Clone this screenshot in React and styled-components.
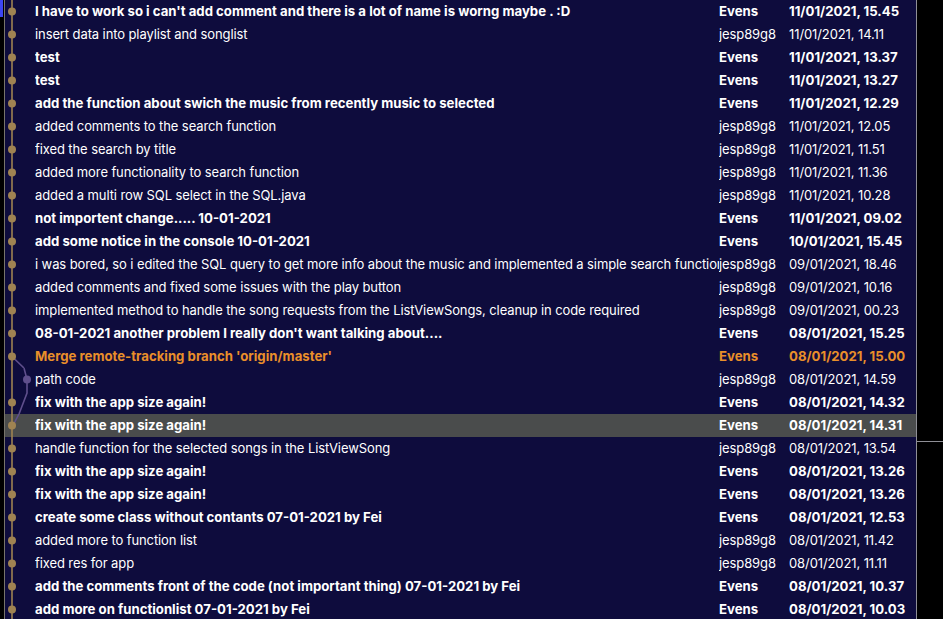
import React from 'react';
import styled, { createGlobalStyle } from 'styled-components';

const GlobalStyle = createGlobalStyle`
  html, body {
    margin: 0;
    padding: 0;
    background: #000;
    overflow: hidden;
  }
  body {
    font-family: Inter, "Noto Sans", "Liberation Sans", sans-serif;
    -webkit-font-smoothing: antialiased;
  }
`;

const GOLD = '#9f8352';
const PURPLE = '#5f4f8c';

const commits = [
  { msg: "I have to work so i can't add comment and there is a lot of name is worng maybe . :D", author: 'Evens', date: '11/01/2021, 15.45' },
  { msg: 'insert data into playlist and songlist', author: 'jesp89g8', date: '11/01/2021, 14.11' },
  { msg: 'test', author: 'Evens', date: '11/01/2021, 13.37' },
  { msg: 'test', author: 'Evens', date: '11/01/2021, 13.27' },
  { msg: 'add the function about swich the music from recently music to selected', author: 'Evens', date: '11/01/2021, 12.29' },
  { msg: 'added comments to the search function', author: 'jesp89g8', date: '11/01/2021, 12.05' },
  { msg: 'fixed the search by title', author: 'jesp89g8', date: '11/01/2021, 11.51' },
  { msg: 'added more functionality to search function', author: 'jesp89g8', date: '11/01/2021, 11.36' },
  { msg: 'added a multi row SQL select in the SQL.java', author: 'jesp89g8', date: '11/01/2021, 10.28' },
  { msg: 'not importent change..... 10-01-2021', author: 'Evens', date: '11/01/2021, 09.02' },
  { msg: 'add some notice in the console 10-01-2021', author: 'Evens', date: '10/01/2021, 15.45' },
  { msg: 'i was bored, so i edited the SQL query to get more info about the music and implemented a simple search function', author: 'jesp89g8', date: '09/01/2021, 18.46' },
  { msg: 'added comments and fixed some issues with the play button', author: 'jesp89g8', date: '09/01/2021, 10.16' },
  { msg: 'implemented method to handle the song requests from the ListViewSongs, cleanup in code required', author: 'jesp89g8', date: '09/01/2021, 00.23' },
  { msg: "08-01-2021 another problem I really don't want talking about....", author: 'Evens', date: '08/01/2021, 15.25' },
  { msg: "Merge remote-tracking branch 'origin/master'", author: 'Evens', date: '08/01/2021, 15.00', merge: true, graph: 'merge' },
  { msg: 'path code', author: 'jesp89g8', date: '08/01/2021, 14.59', graph: 'branch' },
  { msg: 'fix with the app size again!', author: 'Evens', date: '08/01/2021, 14.32', graph: 'cross' },
  { msg: 'fix with the app size again!', author: 'Evens', date: '08/01/2021, 14.31', graph: 'join', selected: true },
  { msg: 'handle function for the selected songs in the ListViewSong', author: 'jesp89g8', date: '08/01/2021, 13.54' },
  { msg: 'fix with the app size again!', author: 'Evens', date: '08/01/2021, 13.26' },
  { msg: 'fix with the app size again!', author: 'Evens', date: '08/01/2021, 13.26' },
  { msg: 'create some class without contants 07-01-2021 by Fei', author: 'Evens', date: '08/01/2021, 12.53' },
  { msg: 'added more to function list', author: 'jesp89g8', date: '08/01/2021, 11.42' },
  { msg: 'fixed res for app', author: 'jesp89g8', date: '08/01/2021, 11.11' },
  { msg: 'add the comments front of the code (not important thing) 07-01-2021 by Fei', author: 'Evens', date: '08/01/2021, 10.37' },
  { msg: 'add more on functionlist 07-01-2021 by Fei', author: 'Evens', date: '08/01/2021, 10.03' },
];

const Screen = styled.div`
  display: flex;
  width: 943px;
  height: 619px;
  overflow: hidden;
  background: #000;
`;

const SideStrip = styled.div`
  width: 4px;
  flex-shrink: 0;
  border-right: 1px solid #77746a;
`;

const SideMarker = styled.div`
  width: 3px;
  height: 17px;
  background: #3d46f2;
`;

const HistoryPanel = styled.div`
  width: 911px;
  flex-shrink: 0;
  background: #0e0c3d;
  border-right: 1px solid #8f8f96;
`;

const RightGutter = styled.div`
  flex: 1;
  padding-top: 441px;
`;

const GutterRule = styled.div`
  height: 1px;
  background: #8f8f96;
`;

const Row = styled.div`
  display: grid;
  grid-template-columns: 30px 684px 70px 1fr;
  align-items: center;
  height: 23px;
  background: ${p => (p.$selected ? '#4a4c4c' : 'transparent')};
  color: ${p => (p.$merge ? '#e98f2a' : '#ffffff')};
  font-size: ${p => (p.$bold ? '13.2px' : '13px')};
  font-weight: ${p => (p.$bold ? 700 : 400)};
  letter-spacing: ${p => (p.$bold ? '0' : '-0.1px')};
  line-height: 16px;
  white-space: nowrap;
`;

const Message = styled.div`
  overflow: hidden;
  padding-bottom: 2px;
`;

const Author = styled.div`
  overflow: hidden;
  padding-bottom: 2px;
`;

const DateCell = styled.div`
  overflow: hidden;
  padding-bottom: 2px;
`;

function GraphCell({ kind }) {
  return (
    <svg width="30" height="23" viewBox="0 0 30 23" style={{ display: 'block' }}>
      <line x1="7" y1="0" x2="7" y2="23" stroke={GOLD} strokeWidth="1.6" />
      {kind === 'merge' && (
        <line x1="7" y1="11.5" x2="19" y2="23" stroke={PURPLE} strokeWidth="1.6" />
      )}
      {kind === 'branch' && (
        <path d="M19 0 L22 11.5 L22 23" fill="none" stroke={PURPLE} strokeWidth="1.6" />
      )}
      {kind === 'cross' && (
        <path d="M22 0 L22 2 L14 23" fill="none" stroke={PURPLE} strokeWidth="1.6" />
      )}
      {kind === 'join' && (
        <path d="M14 0 L8 11.5" fill="none" stroke={PURPLE} strokeWidth="1.6" />
      )}
      {kind === 'branch' ? (
        <circle cx="22" cy="11.5" r="4" fill={PURPLE} />
      ) : (
        <circle cx="7" cy="11.5" r="4" fill={GOLD} />
      )}
    </svg>
  );
}

export default function App() {
  return (
    <>
      <GlobalStyle />
      <Screen>
        <SideStrip>
          <SideMarker />
        </SideStrip>
        <HistoryPanel>
          {commits.map((c, i) => {
            const bold = c.author === 'Evens';
            return (
              <Row key={i} $bold={bold} $merge={c.merge} $selected={c.selected}>
                <GraphCell kind={c.graph} />
                <Message>{c.msg}</Message>
                <Author>{c.author}</Author>
                <DateCell>{c.date}</DateCell>
              </Row>
            );
          })}
        </HistoryPanel>
        <RightGutter>
          <GutterRule />
        </RightGutter>
      </Screen>
    </>
  );
}
